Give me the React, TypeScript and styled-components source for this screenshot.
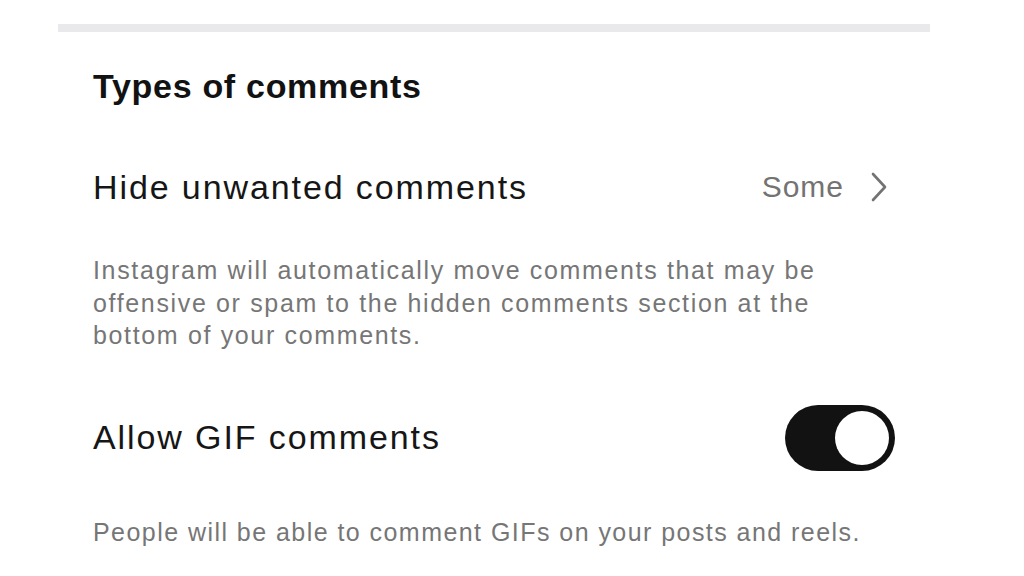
import styled, { createGlobalStyle } from "styled-components";

interface RowProps {
  $height: number;
}
interface DescriptionProps {
  $spacing: number;
}

const GlobalStyle = createGlobalStyle`
  body {
    margin: 0;
    background: #ffffff;
    font-family: "Liberation Sans", Arial, sans-serif;
    color: #111111;
  }
`;

const Page = styled.div`
  width: 1024px;
  height: 576px;
  overflow: hidden;
  padding: 24px 0 0 58px;
  box-sizing: border-box;
`;

const Divider = styled.div`
  width: 872px;
  height: 8px;
  background: #e9e9eb;
`;

const Section = styled.div`
  width: 872px;
  padding: 0 35px;
  box-sizing: border-box;
  display: flex;
  flex-direction: column;
`;

const SectionTitle = styled.h2`
  margin: 0;
  height: 108px;
  display: flex;
  align-items: center;
  font-size: 34px;
  font-weight: 700;
  letter-spacing: 0.7px;
  color: #121212;
`;

const Row = styled.div<RowProps>`
  height: ${(p) => p.$height}px;
  display: flex;
  align-items: center;
  justify-content: space-between;
`;

const RowLabel = styled.span`
  font-size: 34px;
  letter-spacing: 1.9px;
  color: #161616;
`;

const RowValue = styled.span`
  display: flex;
  align-items: center;
  gap: 26px;
  margin-right: 7px;
  font-size: 30px;
  letter-spacing: 1px;
  color: #737373;
`;

const Description = styled.p<DescriptionProps>`
  margin: 0;
  font-size: 25px;
  line-height: 32.5px;
  letter-spacing: ${(p) => p.$spacing}px;
  color: #767676;
`;

const Toggle = styled.div`
  width: 110px;
  height: 66px;
  border-radius: 33px;
  background: #121212;
  display: flex;
  align-items: center;
  justify-content: flex-end;
  padding: 0 6px;
  box-sizing: border-box;
`;

const Knob = styled.div`
  width: 54px;
  height: 54px;
  border-radius: 50%;
  background: #ffffff;
`;

const Chevron = () => (
  <svg width="18" height="30" viewBox="0 0 18 30" fill="none">
    <path d="M3 2l12 13L3 28" stroke="#737373" strokeWidth="2.6" strokeLinecap="round" strokeLinejoin="round" />
  </svg>
);

export default function App() {
  return (
    <>
      <GlobalStyle />
      <Page>
        <Divider />
        <Section>
          <SectionTitle>Types of comments</SectionTitle>
          <Row $height={94}>
            <RowLabel>Hide unwanted comments</RowLabel>
            <RowValue>
              Some
              <Chevron />
            </RowValue>
          </Row>
          <Description $spacing={1.65} style={{ marginTop: 20 }}>
            Instagram will automatically move comments that may be
            <br />
            offensive or spam to the hidden comments section at the
            <br />
            bottom of your comments.
          </Description>
          <Row $height={112} style={{ marginTop: 30 }}>
            <RowLabel>Allow GIF comments</RowLabel>
            <Toggle>
              <Knob />
            </Toggle>
          </Row>
          <Description $spacing={1.45} style={{ marginTop: 22 }}>
            People will be able to comment GIFs on your posts and reels.
          </Description>
        </Section>
      </Page>
    </>
  );
}
